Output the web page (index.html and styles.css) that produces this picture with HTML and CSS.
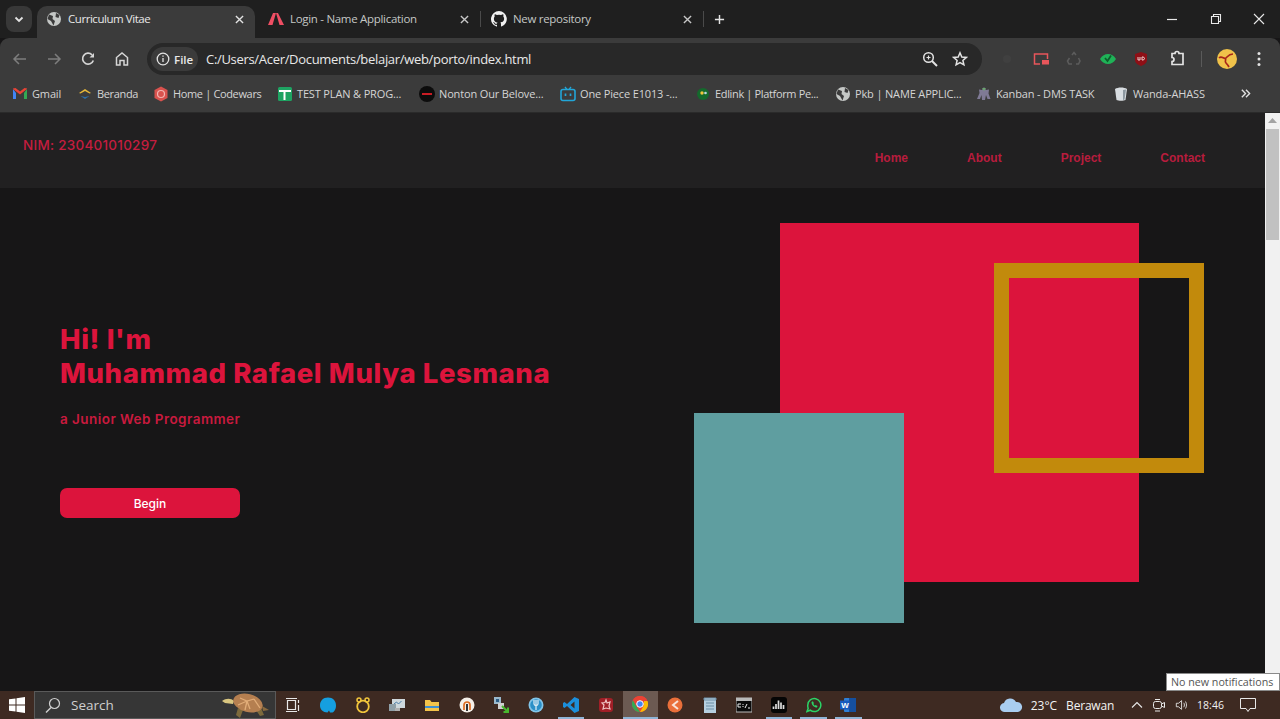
FILE: index.html
```html
<!DOCTYPE html>
<html lang="en">
<head>
<meta charset="utf-8">
<title>Curriculum Vitae</title>
<link rel="stylesheet" href="styles.css">
</head>
<body>
<div class="tabstrip">
    <div class="tab-search"><svg width="10" height="10" viewBox="0 0 10 10"><path d="M1.5 3.5 5 7l3.5-3.5" fill="none" stroke="#e3e3e3" stroke-width="1.8"/></svg></div>
    <div class="tab tab-active">
        <svg class="tab-icon" viewBox="0 0 16 16"><circle cx="8" cy="8" r="7" fill="#c4c7c5"/><path d="M3 3.500 7 5 6.500 8 9 10 7.500 14.500 5 10 1.500 8ZM10 2l3.500 2-1 3-3-1Z" fill="#3b3b3b"/></svg>
        <span class="tab-title">Curriculum Vitae</span>
        <svg class="tab-close" viewBox="0 0 10 10"><path d="M1 1l8 8M9 1l-8 8" stroke="#e3e3e3" stroke-width="1.5"/></svg>
    </div>
    <div class="tab tab-login">
        <svg class="tab-icon" viewBox="0 0 16 16"><path d="M0 14 5 2h3L4.500 14ZM8 2h2l6 12h-4.500Z" fill="#ef4e63"/></svg>
        <span class="tab-title">Login - Name Application</span>
        <svg class="tab-close" viewBox="0 0 10 10"><path d="M1 1l8 8M9 1l-8 8" stroke="#c7c7c7" stroke-width="1.5"/></svg>
    </div>
    <div class="tab-sep"></div>
    <div class="tab">
        <svg class="tab-icon" viewBox="0 0 16 16"><path fill="#f0f0f0" d="M8 0a8 8 0 0 0-2.500 15.600c.4.100.5-.2.500-.4v-1.400c-2.200.5-2.700-1-2.700-1-.4-.9-.9-1.200-.9-1.200-.7-.5.100-.5.100-.5.800.1 1.200.8 1.200.8.700 1.200 1.900.9 2.300.7.100-.5.300-.9.500-1.100-1.800-.2-3.600-.9-3.600-4 0-.9.300-1.600.8-2.100-.1-.2-.4-1 .1-2.100 0 0 .7-.2 2.200.8a7.600 7.600 0 0 1 4 0c1.500-1 2.200-.8 2.200-.8.400 1.100.2 1.900.1 2.100.5.600.8 1.300.8 2.100 0 3.100-1.900 3.700-3.700 3.900.3.300.6.700.6 1.500v2.200c0 .2.100.5.600.4A8 8 0 0 0 8 0Z"/></svg>
        <span class="tab-title">New repository</span>
        <svg class="tab-close" viewBox="0 0 10 10"><path d="M1 1l8 8M9 1l-8 8" stroke="#c7c7c7" stroke-width="1.500"/></svg>
    </div>
    <div class="tab-sep"></div>
    <svg class="tab-new" viewBox="0 0 12 12"><path d="M6 1v10M1 6h10" stroke="#e3e3e3" stroke-width="1.600"/></svg>
    <div class="window-buttons">
        <svg viewBox="0 0 12 12"><path d="M1 6.500h10" stroke="#e8e8e8" stroke-width="1.200"/></svg>
        <svg viewBox="0 0 12 12"><path d="M1.500 3.500h7v7h-7zM3.500 3.500v-2h7v7h-2" fill="none" stroke="#e8e8e8" stroke-width="1.100"/></svg>
        <svg viewBox="0 0 12 12"><path d="M1 1l10 10M11 1 1 11" stroke="#e8e8e8" stroke-width="1.100"/></svg>
    </div>
</div>

<div class="toolbar">
    <div class="nav-buttons">
        <svg viewBox="0 0 16 16"><path d="M14 8H2.500M7 3 2 8l5 5" fill="none" stroke="#7d7d7d" stroke-width="1.500"/></svg>
        <svg viewBox="0 0 16 16"><path d="M2 8h11.500M9 3l5 5-5 5" fill="none" stroke="#7d7d7d" stroke-width="1.500"/></svg>
        <svg viewBox="0 0 16 16"><path d="M13.300 9.500A5.500 5.500 0 1 1 12 3.800" fill="none" stroke="#d6d6d6" stroke-width="1.700"/><path d="M9.500 6.500H14V2Z" fill="#d6d6d6"/></svg>
        <svg viewBox="0 0 16 16"><path d="M2.500 14V6.500L8 2l5.500 4.500V14H10V9.500H6V14Z" fill="none" stroke="#d6d6d6" stroke-width="1.500"/></svg>
    </div>
    <div class="omnibox">
        <div class="file-chip">
            <svg viewBox="0 0 14 14"><circle cx="7" cy="7" r="5.800" fill="none" stroke="#e3e3e3" stroke-width="1.300"/><path d="M7 6v4M7 3.500v1.300" stroke="#e3e3e3" stroke-width="1.300"/></svg>
            <span>File</span>
        </div>
        <span class="url">C:/Users/Acer/Documents/belajar/web/porto/index.html</span>
        <svg class="omni-icon" viewBox="0 0 16 16"><circle cx="6.500" cy="6.500" r="4.800" fill="none" stroke="#e3e3e3" stroke-width="1.500"/><path d="M10 10l5 5" stroke="#e3e3e3" stroke-width="2"/><path d="M4.500 6.500h4M6.500 4.500v4" stroke="#e3e3e3" stroke-width="1.200"/></svg>
        <svg class="omni-icon" viewBox="0 0 16 16"><path d="M8 1.800 9.800 6l4.500.4-3.400 3 1 4.400L8 11.500l-3.900 2.300 1-4.400-3.400-3L6.200 6Z" fill="none" stroke="#e3e3e3" stroke-width="1.500"/></svg>
    </div>
    <div class="extensions">
        <svg viewBox="0 0 16 16"><circle cx="8" cy="8" r="4" fill="#404040"/></svg>
        <svg viewBox="0 0 16 16"><path d="M7 13H1.500V3h13v5" fill="none" stroke="#e8565b" stroke-width="1.500"/><rect x="9" y="9" width="7" height="4.500" fill="#e8565b"/></svg>
        <svg viewBox="0 0 16 16"><path d="M6 4 8 1.500 10 4M12.500 7l1.500 3-1.500 3H10M6 13H3L1.500 10 3.500 7" fill="none" stroke="#5c5c5c" stroke-width="1.600"/></svg>
        <svg viewBox="0 0 16 16"><path d="M0 8c2-3.500 5-5 8-5s6 1.500 8 5c-2 3.500-5 5-8 5S2 11.500 0 8Z" fill="#1fb257"/><path d="m5 7 2.500 3L11 4.500" fill="none" stroke="#0d5c2b" stroke-width="1.700"/></svg>
        <svg viewBox="0 0 16 16"><path d="M8 1 14 3v6c0 3-3 5-6 6-3-1-6-3-6-6V3Z" fill="#8e0f16"/><path d="M5 6v3h2V6M9 6v3h1.500l1-1.500L10.500 6Z" fill="none" stroke="#f0d0d0" stroke-width="1"/></svg>
        <svg class="puzzle" viewBox="0 0 18 18"><path d="M7 3.500a2 2 0 0 1 4 0h4v11H4v-3a2 2 0 0 0 0-4v-4Z" fill="none" stroke="#e3e3e3" stroke-width="1.700"/></svg>
        <div class="toolbar-sep"></div>
        <svg class="avatar" viewBox="0 0 20 20"><circle cx="10" cy="10" r="10" fill="#f0c24a"/><path d="M2 9c3-3 5 2 7 0s3-4 7-4M8 9c2 2-1 3 1 5s2 2 3 4" fill="none" stroke="#a8261a" stroke-width="1.700"/></svg>
        <svg class="kebab" viewBox="0 0 4 16"><circle cx="2" cy="2.500" r="1.500" fill="#e3e3e3"/><circle cx="2" cy="8" r="1.500" fill="#e3e3e3"/><circle cx="2" cy="13.500" r="1.500" fill="#e3e3e3"/></svg>
    </div>
</div>

<div class="bookmarks">
    <div class="bookmark"><svg viewBox="0 0 16 16"><path d="M1 3v10h3V7Z" fill="#4285f4"/><path d="M12 7v6h3V3Z" fill="#34a853"/><path d="M1 3l7 5.500L15 3v-.5L12.500 2 8 5.500 3.500 2 1 2.500Z" fill="#ea4335"/></svg><span>Gmail</span></div>
    <div class="bookmark bm-tight"><svg viewBox="0 0 16 16"><path d="M2 7l6-4 6 4-1.500.5L8 5 3.500 7.500Z" fill="#e8b93a"/><path d="M3.500 10 8 13l4.500-3L8 11Z" fill="#2c6fa8"/></svg><span>Beranda</span></div>
    <div class="bookmark bm-tight"><svg viewBox="0 0 16 16"><path d="M8 .5 14.500 4v8L8 15.500 1.500 12V4Z" fill="#d9524e"/><circle cx="8" cy="8" r="3.500" fill="none" stroke="#f3b5b2" stroke-width="1.200"/></svg><span>Home | Codewars</span></div>
    <div class="bookmark"><svg viewBox="0 0 16 16"><rect x="1" y="1" width="14" height="14" rx="1.500" fill="#1ea362"/><path d="M2 5h12M7.500 5v9" stroke="#fff" stroke-width="2"/></svg><span>TEST PLAN &amp; PROG...</span></div>
    <div class="bookmark"><svg viewBox="0 0 16 16"><circle cx="8" cy="8" r="8" fill="#0c0c0c"/><rect x="3" y="7" width="10" height="2" fill="#c81c24"/></svg><span>Nonton Our Belove...</span></div>
    <div class="bookmark"><svg viewBox="0 0 16 16"><path d="M5 1l2 2.500M11 1 9 3.500" stroke="#22a6d8" stroke-width="1.300"/><rect x="1" y="3.500" width="14" height="11" rx="2" fill="none" stroke="#22a6d8" stroke-width="1.600"/><path d="M5.500 7.500v2.500M10.500 7.500v2.500" stroke="#22a6d8" stroke-width="1.700"/></svg><span>One Piece E1013 -...</span></div>
    <div class="bookmark bm-tight"><svg viewBox="0 0 16 16"><circle cx="8" cy="8" r="6" fill="#14692c"/><circle cx="7" cy="7" r="1.700" fill="#f0c53a"/><circle cx="10.500" cy="7" r="1.300" fill="#b9d8e0"/></svg><span>Edlink | Platform Pe...</span></div>
    <div class="bookmark"><svg viewBox="0 0 16 16"><circle cx="8" cy="8" r="7" fill="#c4c7c5"/><path d="M3 3.500 7 5 6.500 8 9 10 7.500 14.500 5 10 1.500 8ZM10 2l3.500 2-1 3-3-1Z" fill="#3b3b3b"/></svg><span>Pkb | NAME APPLIC...</span></div>
    <div class="bookmark"><svg viewBox="0 0 16 16"><path d="M8 1l2 3 3-.5-.5 4 2 5.500h-3L10 9l-1 5H6L5.500 9 4 13H1l2.500-6L3 3.500 6 4Z" fill="#7f7a95"/><path d="M6 2l2 3 2-3" fill="#6ba56f"/></svg><span>Kanban - DMS TASK</span></div>
    <div class="bookmark"><svg viewBox="0 0 16 16"><path d="M2 3c3-2 9-2 12 0l-1.500 11c-2 1-7 1-9 0Z" fill="#d9dee2"/><path d="M10 4l3-.5-1.500 10-1.500.5Z" fill="#8e99a1"/></svg><span>Wanda-AHASS</span></div>
    <svg class="bookmarks-more" viewBox="0 0 12 12"><path d="M2 2l4 4-4 4M6.500 2l4 4-4 4" fill="none" stroke="#e3e3e3" stroke-width="1.500"/></svg>
</div>

<div class="viewport">
    <div class="page">
        <header class="site-header">
            <div class="nim">NIM: 230401010297</div>
            <nav class="site-nav">
                <a>Home</a>
                <a>About</a>
                <a>Project</a>
                <a>Contact</a>
            </nav>
        </header>
        <main class="hero">
            <div class="hero-text">
                <h1>Hi! I'm<br>Muhammad Rafael Mulya Lesmana</h1>
                <p>a Junior Web Programmer</p>
                <button class="begin">Begin</button>
            </div>
            <div class="hero-art">
                <div class="shape-red"></div>
                <div class="shape-frame"></div>
                <div class="shape-teal"></div>
            </div>
        </main>
    </div>
    <div class="scrollbar">
        <svg class="scroll-arrow" viewBox="0 0 9 5"><path d="M4.500 0 9 5H0Z" fill="#a3a3a3"/></svg>
        <div class="scroll-thumb"></div>
    </div>
</div>

<footer class="taskbar">
    <svg class="start" viewBox="0 0 16 16"><path d="M0 2.300 6.500 1.400V7.500H0ZM7.500 1.200 16 0V7.500H7.500ZM0 8.500H6.500V14.600L0 13.700ZM7.500 8.500H16V16L7.500 14.800Z" fill="#fff"/></svg>
    <div class="task-search">
        <svg viewBox="0 0 16 16"><circle cx="9.500" cy="6.500" r="5" fill="none" stroke="#d0d0d0" stroke-width="1.200"/><path d="M6 10.500 1 15.500" stroke="#d0d0d0" stroke-width="1.400"/></svg>
        <span>Search</span>
        <svg class="turtle" viewBox="0 0 48 26"><path d="M16 16l-2 7 4 3 3-8ZM34 18l4 6 4-1-3-7Z" fill="#7d6a3c"/><path d="M12 9c-3-3-8-3-12 0l3 2 8 1Z" fill="#d9c680"/><ellipse cx="26" cy="11" rx="15" ry="9" fill="#b57f50" transform="rotate(14 26 11)"/><path d="M18 6l7 3 7-2M16 13l9-4 3 8M32 7l6 9M25 9l-2 9" fill="none" stroke="#e2ad78" stroke-width="1.300"/><path d="M40 14l7 4-6 1Z" fill="#8a6a3e"/></svg>
    </div>
    <div class="task-icons">
        <div class="task-icon"><svg viewBox="0 0 16 16"><path d="M2.500 3.500h8v9h-8zM1 1.500h11M1 14.500h11M13.500 3v3M13.500 8v6" fill="none" stroke="#e8e8e8" stroke-width="1.200"/></svg></div>
        <div class="task-icon"><svg viewBox="0 0 16 16"><path d="M8 .5c5 0 8 3.500 8 8 0 4-2 6.500-3.500 7H10l-1-2-1.500 2C3 15.500 0 12.500 0 8.500 0 4 3 .5 8 .5Z" fill="#159fe0"/></svg></div>
        <div class="task-icon"><svg viewBox="0 0 16 16"><circle cx="8" cy="9.500" r="5.800" fill="none" stroke="#f2c63c" stroke-width="1.800"/><circle cx="4" cy="3" r="2" fill="none" stroke="#f2c63c" stroke-width="1.500"/><circle cx="12" cy="3" r="2" fill="none" stroke="#f2c63c" stroke-width="1.500"/></svg></div>
        <div class="task-icon"><svg viewBox="0 0 16 16"><rect x="3" y="2" width="13" height="9" fill="#cfd8dc"/><path d="M5 7l2.500-2 2 2 3-3" fill="none" stroke="#4a7ea8" stroke-width="1"/><rect x="0" y="7" width="7" height="7" fill="#90a0a8"/><rect x="6" y="11" width="5" height="3" fill="#b0b0b0"/></svg></div>
        <div class="task-icon"><svg viewBox="0 0 16 16"><path d="M1 3h5l1.500 2H15v9H1Z" fill="#f2c34a"/><rect x="1" y="9" width="14" height="2" fill="#3d8fd1"/></svg></div>
        <div class="task-icon"><svg viewBox="0 0 16 16"><circle cx="8" cy="8" r="7.500" fill="#f5efe8"/><path d="M5 13V8a3 3 0 0 1 6 0v5" fill="none" stroke="#dd6b20" stroke-width="1.700"/><rect x="7" y="7" width="2" height="7" fill="#333"/></svg></div>
        <div class="task-icon"><svg viewBox="0 0 16 16"><rect x="1" y="0" width="7" height="7" fill="#9ab8cc"/><rect x="3" y="2" width="3" height="3" fill="#2c5d86"/><rect x="5" y="6" width="6" height="6" fill="#d0d0d0"/><path d="M9 9l6 6M15 10.500V15h-4.500" fill="none" stroke="#47b82e" stroke-width="2"/></svg></div>
        <div class="task-icon"><svg viewBox="0 0 16 16"><circle cx="8" cy="8" r="7.500" fill="#82c4e8"/><circle cx="8" cy="8" r="5.800" fill="#2b90c8"/><path d="M6 3v4c0 1 1 1.500 2 1.500S10 8 10 7V3M8 3v10" fill="none" stroke="#f2f8fb" stroke-width="1.100"/></svg></div>
        <div class="task-icon task-open"><svg viewBox="0 0 16 16"><path d="M11.500 0 16 2v12l-4.500 2L4 9l-2.500 2L0 10V6l1.500-1L4 7ZM11.500 4.500 7.500 8l4 3.500Z" fill="#1c8fdc"/></svg></div>
        <div class="task-icon"><svg viewBox="0 0 16 16"><rect x="1" y="1" width="14" height="14" rx="3" fill="#a11f27"/><path d="M8 3l1 3 3-1-1 4 1 3-4-1-3 1 1-4-2-2 3-.5Z" fill="none" stroke="#efc2c2" stroke-width="1.200"/></svg></div>
        <div class="task-icon task-active"><svg viewBox="0 0 16 16"><circle cx="8" cy="8" r="8" fill="#ea4335"/><path d="M8 16a8 8 0 0 1-7-12l4 7.500Z" fill="#34a853"/><path d="M1 4a8 8 0 0 1 14 0H8a4 4 0 0 0-3.500 6Z" fill="#ea4335"/><path d="M15.500 5a8 8 0 0 1-7.500 11l3.500-6 .5-5Z" fill="#fbbc05"/><circle cx="8" cy="8" r="3.300" fill="#4285f4" stroke="#fff" stroke-width="1"/></svg></div>
        <div class="task-icon"><svg viewBox="0 0 16 16"><circle cx="8" cy="8" r="7.500" fill="#ea6f3a"/><path d="M11 4 6 8l5 4" fill="none" stroke="#f9e3d8" stroke-width="2"/></svg></div>
        <div class="task-icon"><svg viewBox="0 0 16 16"><rect x="2" y="1" width="12" height="15" fill="#b6cfe0"/><path d="M2 1h12v2H2ZM4 6h8M4 9h8M4 12h8" fill="none" stroke="#6b8ea6" stroke-width="1"/></svg></div>
        <div class="task-icon"><svg viewBox="0 0 16 16"><rect y="1" width="16" height="14" fill="#0b0b0b" stroke="#bbb"/><rect y="1" width="16" height="3" fill="#b9b9b9"/><path d="M2 7h3M2 10h3M2 7v3M7 7v1M7 9v1M9 11l2-4M12 11h2" stroke="#eee" stroke-width="1"/></svg></div>
        <div class="task-icon task-open"><svg viewBox="0 0 16 16"><rect width="16" height="16" rx="3" fill="#050505"/><path d="M2.500 12V9.500M5 12V7M7.500 12V3.500M10 12V5.500M12.500 12V8" stroke="#ddd" stroke-width="1.700"/></svg></div>
        <div class="task-icon task-open"><svg viewBox="0 0 16 16"><path d="M1.800 8a6.500 6.500 0 1 1 2.500 5.200L1 14.500l1.200-3.200A6.500 6.500 0 0 1 1.800 8Z" fill="none" stroke="#2bd366" stroke-width="1.500"/><path d="M5.500 5c0 3 2.500 5.500 5.500 5.500l.5-1.500-2-1-.7.700L7.300 7l.6-.8-1-2Z" fill="#2bd366"/></svg></div>
        <div class="task-icon task-open"><svg viewBox="0 0 16 16"><rect x="4" y="1" width="12" height="14" rx="1" fill="#2f7fd6"/><rect x="9" y="1" width="7" height="14" fill="#154f9e"/><rect y="3.500" width="9.500" height="9" fill="#185abd"/><text x="1.300" y="10.800" class="word-w">W</text></svg></div>
    </div>
    <div class="tray">
        <svg class="tray-cloud" viewBox="0 0 24 16"><path d="M6 15a4.500 4.500 0 0 1-1-9 6.500 6.500 0 0 1 12-1 5 5 0 0 1 2 10Z" fill="#a9cdf0"/></svg>
        <span class="tray-temp">23°C</span>
        <span class="tray-weather">Berawan</span>
        <svg class="tray-caret" viewBox="0 0 12 8"><path d="M1 6.500 6 1.500l5 5" fill="none" stroke="#e8e8e8" stroke-width="1.100"/></svg>
        <svg class="tray-small" viewBox="0 0 14 16"><rect x="1.500" y="4.500" width="8" height="7" rx="2" fill="none" stroke="#e8e8e8"/><path d="M9.500 7l3-1.500v5l-3-1.500M3 2.500h5M3 14h5" fill="none" stroke="#e8e8e8"/></svg>
        <svg class="tray-small" viewBox="0 0 16 16"><path d="M1.500 6v4H4l3.500 3V3L4 6ZM10 5.500c1 1.500 1 3.500 0 5M12 4c1.500 2.500 1.500 5.500 0 8" fill="none" stroke="#e8e8e8"/></svg>
        <span class="tray-time">18:46</span>
        <div class="tray-notify"><svg viewBox="0 0 16 16"><path d="M.5 1.500h15v10H10l-2 3-2-3H.5Z" fill="none" stroke="#e8e8e8"/></svg></div>
    </div>
</footer>
<div class="tooltip">No new notifications</div>
</body>
</html>
```

FILE: styles.css
```css
* {
    box-sizing: border-box;
}
html, body {
    margin: 0;
    height: 719px;
    overflow: hidden;
}
body {
    display: flex;
    flex-direction: column;
    position: relative;
    background-color: #171617;
    font-family: "Open Sans", "Noto Sans", sans-serif;
    font-size: 12px;
}

/* browser tabs */
.tabstrip {
    height: 38px;
    display: flex;
    align-items: flex-end;
    padding-left: 6px;
    background-color: #1f1f1f;
}
.tab-search {
    width: 26px;
    height: 26px;
    margin: 0 5px 6px 0;
    display: flex;
    align-items: center;
    justify-content: center;
    border-radius: 8px;
    background-color: #383838;
}
.tab {
    width: 222px;
    height: 32px;
    display: flex;
    align-items: center;
    padding: 0 9px 6px 10px;
    color: #c4c7c5;
}
.tab-login {
    width: 225px;
    padding-left: 13px;
}
.tab-active {
    width: 218px;
    padding-left: 9px;
    border-radius: 10px 10px 0 0;
    background-color: #3b3b3b;
    color: #e8e8e8;
}
.tab-active .tab-title {
    letter-spacing: -0.45px;
}
.tab-icon {
    width: 16px;
    height: 16px;
    margin-right: 6px;
}
.tab-title {
    flex: 1;
    margin-top: -1px;
    font-size: 11.500px;
    letter-spacing: -0.3px;
}
.tab-close {
    width: 9px;
    height: 9px;
    margin-right: 2px;
}
.tab-sep {
    width: 1px;
    height: 16px;
    margin-bottom: 11px;
    background-color: #4a4a4a;
}
.tab-new {
    width: 11px;
    height: 11px;
    margin: 0 0 13px 10px;
}
.window-buttons {
    margin-left: auto;
    margin-bottom: 13px;
    display: flex;
    gap: 31.500px;
    padding-right: 15px;
}
.window-buttons svg {
    width: 12px;
    height: 12px;
}

/* address bar */
.toolbar {
    height: 37px;
    display: flex;
    align-items: flex-end;
    padding-left: 12px;
    border-radius: 9px 9px 0 0;
    background-color: #3b3b3b;
}
.nav-buttons {
    display: flex;
    gap: 18px;
    width: 135px;
    height: 32px;
    align-items: center;
}
.nav-buttons svg {
    width: 16px;
    height: 16px;
}
.omnibox {
    width: 835px;
    height: 32px;
    display: flex;
    align-items: center;
    gap: 14px;
    padding: 0 14px 0 4px;
    border-radius: 16px;
    background-color: #282828;
}
.file-chip {
    height: 24px;
    width: 47px;
    display: flex;
    align-items: center;
    gap: 4px;
    padding-left: 5px;
    border-radius: 12px;
    background-color: #3b3b3b;
    color: #e8e8e8;
    font-size: 11.500px;
    font-weight: 600;
}
.file-chip svg {
    width: 14px;
    height: 14px;
}
.url {
    flex: 1;
    margin-left: -6px;
    color: #e8e8e8;
    font-size: 13px;
    letter-spacing: -0.31px;
}
.omni-icon {
    width: 16px;
    height: 16px;
}
.extensions {
    flex: 1;
    height: 32px;
    display: flex;
    align-items: center;
    gap: 17.500px;
    padding-left: 17px;
}
.extensions svg {
    width: 16px;
    height: 16px;
    flex: none;
}
.extensions .puzzle {
    width: 18px;
    height: 18px;
    margin-left: 1px;
}
.extensions .kebab {
    width: 4px;
    margin-left: 3px;
}
.extensions .avatar {
    width: 20px;
    height: 20px;
    margin-left: -3px;
}
.toolbar-sep {
    width: 1px;
    height: 16px;
    margin-left: -2px;
    background-color: #5a5a5a;
}

/* bookmarks */
.bookmarks {
    height: 38px;
    display: grid;
    grid-template-columns: 65px 76px 124px 142px 141px 135px 140px 141px 137px 127px 12px;
    align-items: center;
    padding-left: 12px;
    background-color: #3b3b3b;
    border-bottom: 1px solid #2a2a2a;
}
.bookmark {
    display: flex;
    align-items: center;
    gap: 4px;
    color: #d5d5d5;
    font-size: 11px;
    letter-spacing: -0.15px;
    white-space: nowrap;
}
.bm-tight {
    letter-spacing: -0.35px;
}
.bookmark svg {
    width: 16px;
    height: 16px;
    flex: none;
}
.bookmarks-more {
    width: 11px;
    height: 11px;
}

/* the page itself */
.viewport {
    flex: 1;
    min-height: 0;
    display: flex;
}
.page {
    flex: 1;
    background-color: #171617;
}
.site-header {
    height: 75px;
    display: flex;
    justify-content: space-between;
    padding: 24px 60px 0 23px;
    background-color: #212021;
}
.nim {
    color: #c41d3f;
    font-family: Inter, sans-serif;
    font-size: 13.500px;
    font-weight: 500;
    letter-spacing: 0.25px;
}
.site-nav {
    display: flex;
    gap: 59px;
    padding-top: 14px;
}
.site-nav a {
    color: #b81c3d;
    font-family: "Liberation Sans", sans-serif;
    font-size: 12px;
    font-weight: 700;
}
.hero {
    display: flex;
    justify-content: space-between;
    padding: 35px 61px 0 60px;
}
.hero-text {
    padding-top: 99px;
}
.hero-text h1 {
    margin: 0;
    color: #dc143c;
    font-family: Inter, sans-serif;
    font-size: 27.500px;
    font-weight: 800;
    letter-spacing: 0.6px;
    line-height: 34px;
}
.hero-text p {
    margin: 19px 0 0;
    color: #c91a3e;
    font-family: Inter, sans-serif;
    font-size: 13.500px;
    font-weight: 600;
    letter-spacing: 0.45px;
    line-height: 20px;
}
.begin {
    display: block;
    width: 180px;
    height: 30px;
    margin-top: 59px;
    border: 0;
    border-radius: 7px;
    background-color: #dc143c;
    color: #fff;
    font-family: Inter, sans-serif;
    font-size: 12px;
    font-weight: 500;
}
.hero-art {
    position: relative;
    width: 510px;
    height: 400px;
}
.shape-red {
    position: absolute;
    left: 86px;
    top: 0;
    width: 359px;
    height: 359px;
    background-color: #dc143c;
}
.shape-frame {
    position: absolute;
    left: 300px;
    top: 40px;
    width: 210px;
    height: 210px;
    border: 15px solid #c28a0c;
}
.shape-teal {
    position: absolute;
    left: 0;
    top: 190px;
    width: 210px;
    height: 210px;
    background-color: #5f9ea0;
}
.scrollbar {
    width: 15px;
    background-color: #f1f1f1;
    display: flex;
    flex-direction: column;
    align-items: center;
}
.scroll-arrow {
    width: 9px;
    height: 5px;
    margin: 5px 0 6px;
}
.scroll-thumb {
    width: 13px;
    height: 111px;
    background-color: #c1c1c1;
}

/* windows taskbar */
.taskbar {
    height: 28px;
    display: flex;
    align-items: center;
    background-color: #3e2a22;
    color: #f2f2f2;
}
.start {
    width: 16px;
    height: 16px;
    margin: 0 9px 0 9px;
}
.task-search {
    width: 242px;
    height: 28px;
    display: flex;
    align-items: center;
    gap: 10px;
    padding-left: 10px;
    background-color: #363636;
    border: 1px solid #5a5a5a;
    color: #cfcfcf;
    font-size: 13.500px;
}
.task-search > svg {
    width: 16px;
    height: 16px;
}
.task-search .turtle {
    width: 48px;
    height: 26px;
    margin-left: auto;
    margin-right: 5px;
}
.task-icons {
    display: flex;
}
.task-icon {
    position: relative;
    width: 34.700px;
    height: 28px;
    display: flex;
    align-items: center;
    justify-content: center;
}
.task-icon svg {
    width: 16px;
    height: 16px;
}
.task-open::after {
    content: "";
    position: absolute;
    left: 4px;
    right: 4px;
    bottom: 0;
    height: 2px;
    background-color: #8fb4d6;
}
.task-active {
    background-color: #6c5a52;
    border-bottom: 2px solid #8fb4d6;
}
.word-w {
    fill: #fff;
    font-family: "Liberation Sans", sans-serif;
    font-size: 8px;
    font-weight: 700;
}
.tray {
    flex: 1;
    display: flex;
    align-items: center;
    padding-left: 133px;
    font-size: 12px;
}
.tray-cloud {
    width: 24px;
    height: 16px;
}
.tray-temp {
    margin-left: 8px;
}
.tray-weather {
    margin-left: 9px;
    letter-spacing: -0.2px;
}
.tray-caret {
    width: 12px;
    height: 8px;
    margin-left: 17px;
}
.tray-small {
    width: 14px;
    height: 16px;
    margin-left: 9px;
}
.tray-time {
    margin-left: 8px;
    font-size: 10.500px;
}
.tray-notify {
    margin-left: 16px;
    width: 16px;
    height: 16px;
}
.tooltip {
    position: absolute;
    right: 0;
    bottom: 28px;
    width: 114px;
    height: 18px;
    padding-left: 4px;
    background-color: #fff;
    border: 1px solid #8a8a8a;
    color: #555;
    font-size: 10.700px;
    line-height: 16px;
    white-space: nowrap;
}
```
